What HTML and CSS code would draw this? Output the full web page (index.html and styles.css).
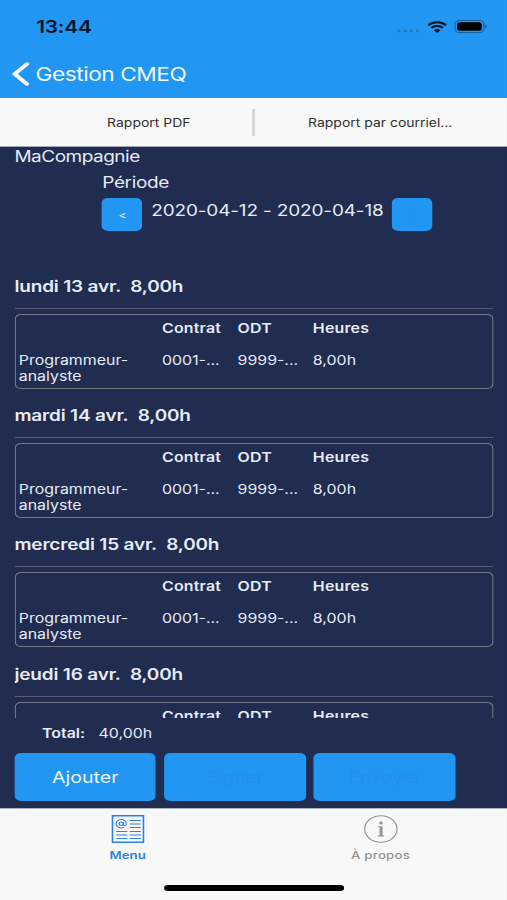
FILE: index.html
```
<!DOCTYPE html>
<html lang="fr">
  <head>
    <meta charset="UTF-8" />
    <meta name="viewport" content="width=device-width, initial-scale=1.0" />
    <title>Gestion CMEQ</title>
    <link rel="stylesheet" href="styles.css">
  </head>
  <body>
    <div class="screen">
      <header class="header">
        <div class="status-bar">
          <span class="time">13:44</span>
          <div class="status-icons">
            <svg class="signal" viewBox="0 0 20 4">
              <circle cx="2" cy="2" r="1.5" />
              <circle cx="7.3" cy="2" r="1.5" />
              <circle cx="12.6" cy="2" r="1.5" />
              <circle cx="17.9" cy="2" r="1.5" />
            </svg>
            <svg class="wifi" viewBox="0 0 16 12">
              <path d="M.8 4.2a10.3 10.3 0 0 1 14.4 0" />
              <path d="M3.3 6.9a6.8 6.8 0 0 1 9.4 0" />
              <path class="wifi-dot" d="M8 12 5.3 9.3a3.9 3.9 0 0 1 5.4 0z" />
            </svg>
            <svg class="battery" viewBox="0 0 27 13">
              <rect class="battery-case" x=".5" y=".5" width="23.6" height="12" rx="3.6" />
              <rect x="2.2" y="2.2" width="20.2" height="8.6" rx="2" />
              <path class="battery-tip" d="M25.2 4.4v4.2c1.8-.7 1.8-3.5 0-4.2z" />
            </svg>
          </div>
        </div>
        <div class="nav">
          <svg class="back" viewBox="0 0 14 24">
            <path d="M12 2 2 12l10 10" />
          </svg>
          <h1>Gestion CMEQ</h1>
        </div>
      </header>

      <div class="toolbar">
        <a>Rapport PDF</a>
        <a>Rapport par courriel...</a>
      </div>

      <main class="content">
        <p class="company">MaCompagnie</p>
        <div class="period">
          <p>Période</p>
          <div class="period-row">
            <button class="btn-small">&lt;</button>
            <span class="dates">2020-04-12 - 2020-04-18</span>
            <button class="btn-small off">&gt;</button>
          </div>
        </div>

        <div class="days">
          <section class="day">
            <h2>lundi 13 avr.&nbsp; 8,00h</h2>
            <div class="card">
              <b></b><b>Contrat</b><b>ODT</b><b>Heures</b>
              <span class="job">Programmeur-analyste</span><span>0001-...</span><span>9999-...</span><span>8,00h</span>
            </div>
          </section>
          <section class="day">
            <h2>mardi 14 avr.&nbsp; 8,00h</h2>
            <div class="card">
              <b></b><b>Contrat</b><b>ODT</b><b>Heures</b>
              <span class="job">Programmeur-analyste</span><span>0001-...</span><span>9999-...</span><span>8,00h</span>
            </div>
          </section>
          <section class="day">
            <h2>mercredi 15 avr.&nbsp; 8,00h</h2>
            <div class="card">
              <b></b><b>Contrat</b><b>ODT</b><b>Heures</b>
              <span class="job">Programmeur-analyste</span><span>0001-...</span><span>9999-...</span><span>8,00h</span>
            </div>
          </section>
          <section class="day">
            <h2>jeudi 16 avr.&nbsp; 8,00h</h2>
            <div class="card">
              <b></b><b>Contrat</b><b>ODT</b><b>Heures</b>
            </div>
          </section>
        </div>

        <div class="total"><b>Total:</b><span>40,00h</span></div>
        <div class="actions">
          <button>Ajouter</button>
          <button class="off">Signer</button>
          <button class="off">Envoyer</button>
        </div>
      </main>

      <footer class="footer">
        <nav class="tabs">
          <a class="tab active">
            <svg class="icon-menu" viewBox="0 0 27 28">
              <rect x=".75" y=".75" width="25.5" height="26.5" stroke-width="1.5" />
              <path d="M15 5.5h9M15 9h9M15 12.5h9M4 16.5h9M4 20h9M4 23.5h9M15 16.5h9M15 20h9M15 23.5h9" />
              <circle cx="8" cy="8.8" r="1.7" />
              <path d="M9.8 7v2.6c0 1.6 2.4 1.4 2.4-.8a4.2 4.2 0 1 0-1.8 3.4" />
            </svg>
            <span>Menu</span>
          </a>
          <a class="tab">
            <svg class="icon-info" viewBox="0 0 28 28">
              <circle cx="14" cy="14" r="13.2" />
              <path class="fill" d="M11.6 11.2h3.8v9.2h1.4v1h-5.4v-1h1.6v-8.2h-1.4z" />
              <circle class="fill" cx="14.1" cy="7.9" r="1.5" />
            </svg>
            <span>À propos</span>
          </a>
        </nav>
        <div class="home-bar"></div>
      </footer>
    </div>
  </body>
</html>
```

FILE: styles.css
```
* {
  box-sizing: border-box;
}

body {
  margin: 0;
  overflow: hidden;
  background: #202c50;
  font-family: Inter, "Liberation Sans", sans-serif;
}

.screen {
  width: 414px;
  height: 900px;
  display: flex;
  flex-direction: column;
  transform: scaleX(1.2246);
  transform-origin: 0 0;
}

h1,
h2,
p {
  margin: 0;
  font-weight: 400;
}

svg {
  display: block;
  fill: none;
}

.header {
  height: 98px;
  background: #2196f3;
}

.status-bar {
  height: 51px;
  padding: 2px 16px 0 29.5px;
  display: flex;
  align-items: center;
  justify-content: space-between;
}

.time {
  font-size: 17px;
  font-weight: 600;
  letter-spacing: -0.15px;
  color: #07131f;
}

.status-icons {
  display: flex;
  align-items: center;
}

.signal {
  width: 19px;
  height: 4px;
  margin: 8px 6px 0 0;
  fill: #1d78c4;
}

.wifi {
  width: 16px;
  height: 12px;
  margin-right: 6px;
  stroke: #04101a;
  stroke-width: 2;
}

.wifi-dot {
  fill: #04101a;
  stroke: none;
}

.battery {
  width: 27px;
  height: 13px;
  fill: #000;
}

.battery-case {
  fill: none;
  stroke: #17639f;
}

.battery-tip {
  fill: #17639f;
}

.nav {
  height: 46px;
  padding-left: 10px;
  display: flex;
  align-items: center;
  gap: 5px;
}

.back {
  width: 14px;
  height: 24px;
  stroke: #fff;
  stroke-width: 3.4;
  stroke-linecap: round;
}

.nav h1 {
  font-size: 18.5px;
  letter-spacing: -0.37px;
  color: #f0f8ff;
}

.toolbar {
  height: 49px;
  display: grid;
  grid-template-columns: 208px 1fr;
  align-items: center;
  background: #f8f8f8;
  border-bottom: 1px solid #a5a9b8;
}

.toolbar a {
  height: 27px;
  line-height: 29px;
  font-size: 11.4px;
  color: #303030;
  text-align: center;
  padding-left: 37px;
}

.toolbar a:last-child {
  padding-left: 0;
  padding-right: 1px;
}

.toolbar a:first-child {
  border-right: 2px solid #cfcfcf;
}

.content {
  height: 661px;
  padding: 0 11.5px 0 11.8px;
  background: #202c50;
  color: #e6ebf5;
}

.company,
.period p,
.dates {
  font-size: 15.5px;
  line-height: 20px;
}

.company {
  height: 25px;
  line-height: 19px;
  letter-spacing: -0.4px;
}

.period {
  height: 100px;
  padding-left: 71.7px;
}

.period p {
  height: 20px;
  line-height: 22px;
  letter-spacing: -0.3px;
}

.period-row {
  display: flex;
  gap: 7px;
  margin-top: 6px;
}

.dates {
  width: 190px;
  padding-top: 3px;
  letter-spacing: -0.12px;
  white-space: nowrap;
}

button {
  padding: 0;
  border: none;
  border-radius: 5px;
  background: #2196f3;
  color: #eef7ff;
  font-family: inherit;
}

.btn-small {
  width: 33px;
  height: 33px;
  font-size: 10px;
}

button.off {
  color: #2690e8;
}

.days {
  height: 446px;
  overflow: hidden;
}

.day {
  height: 129.2px;
}

.day h2 {
  height: 37px;
  padding-top: 5px;
  margin-bottom: 5px;
  font-size: 15.5px;
  line-height: 20px;
  font-weight: 600;
  letter-spacing: -0.14px;
  border-bottom: 1px solid #535c76;
}

.card {
  height: 75px;
  padding: 4px 2.5px;
  display: grid;
  grid-template-columns: 117px 61.7px 61.5px 1fr;
  grid-template-rows: 32px 32px;
  border: 1.5px solid #747b87;
  border-radius: 5px;
  font-size: 13px;
  line-height: 16px;
}

.card b {
  padding-top: 1px;
  font-weight: 600;
  letter-spacing: 0.15px;
}

.card span {
  padding-top: 0.6px;
}

.card .job {
  width: 100px;
}

.total {
  height: 35px;
  padding: 5px 0 0 22.5px;
  display: flex;
  gap: 11px;
  font-size: 13px;
  line-height: 20px;
}

.total b {
  font-weight: 600;
}

.actions {
  display: flex;
  gap: 6.5px;
}

.actions button {
  width: 115.7px;
  height: 48px;
  font-size: 16px;
}

.actions .off {
  letter-spacing: -0.3px;
}

.footer {
  height: 92px;
  background: #f8f8f8;
  border-top: 1px solid #aeb5c3;
}

.tabs {
  height: 76px;
  padding-top: 6px;
  display: flex;
}

.tab {
  flex: 1;
  display: flex;
  flex-direction: column;
  align-items: center;
  font-size: 10.8px;
  font-weight: 500;
  line-height: 14px;
  letter-spacing: 0.2px;
  color: #929292;
}

.tab.active {
  padding-left: 1px;
  color: #2b80e6;
  font-weight: 600;
  letter-spacing: 0;
}

.tab svg {
  height: 28px;
  margin-bottom: 6px;
  stroke: currentColor;
}

.icon-menu {
  width: 27px;
}

.icon-info {
  width: 28px;
}

.tab .fill {
  fill: currentColor;
  stroke: none;
}

.home-bar {
  width: 147px;
  height: 6px;
  margin: 0 auto;
  border-radius: 3px;
  background: #000;
}
```
